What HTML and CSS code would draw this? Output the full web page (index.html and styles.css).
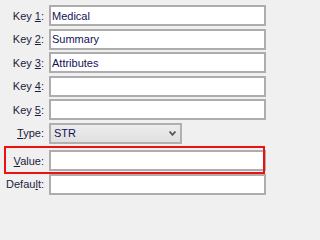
FILE: index.html
```html
<!DOCTYPE html>
<html>
<head>
<meta charset="utf-8">
<link rel="stylesheet" href="styles.css">
</head>
<body>
<div class="form">
  <div class="row"><label class="lbl">Key <u>1</u>:</label><input class="field" type="text" value="Medical"></div>
  <div class="row"><label class="lbl">Key <u>2</u>:</label><input class="field" type="text" value="Summary"></div>
  <div class="row"><label class="lbl">Key <u>3</u>:</label><input class="field" type="text" value="Attributes"></div>
  <div class="row"><label class="lbl">Key <u>4</u>:</label><input class="field" type="text" value=""></div>
  <div class="row"><label class="lbl">Key <u>5</u>:</label><input class="field" type="text" value=""></div>
  <div class="row"><label class="lbl"><u>T</u>ype:</label>
    <div class="combo"><span class="combo-text">STR</span>
      <svg class="chev" width="7" height="5" viewBox="0 0 7 5"><path d="M0.5 0.5 L3.5 3.8 L6.5 0.5" fill="none" stroke="#585858" stroke-width="1.8"/></svg>
    </div>
  </div>
  <div class="row row-value"><label class="lbl"><u>V</u>alue:</label><input class="field" type="text" value=""></div>
  <div class="row"><label class="lbl">Defau<u>l</u>t:</label><input class="field" type="text" value=""></div>
</div>
<div class="highlight"></div>
</body>
</html>
```
FILE: styles.css
```css
html {
  background: #f0f0f0;
}
body {
  margin: 0;
  padding: 0;
  background: #f0f0f0;
  font-family: "Liberation Sans", Arial, sans-serif;
  font-size: 11px;
}
.form {
  width: 266px;
  padding-top: 5px;
  display: flex;
  flex-direction: column;
  gap: 2.5px;
}
.row {
  display: grid;
  grid-template-columns: 44px 1fr;
  column-gap: 5px;
  height: 21px;
  align-items: center;
}
.row-value {
  margin-top: 4px;
}
.lbl {
  text-align: right;
  color: #1c1c3a;
  white-space: nowrap;
}
.field {
  box-sizing: border-box;
  height: 21px;
  width: 217px;
  margin: 0;
  border: 2px solid #adadad;
  background: #fff;
  padding: 0 1px;
  font-family: "Liberation Sans", Arial, sans-serif;
  font-size: 11px;
  color: #12125a;
  outline: none;
}
.combo {
  box-sizing: border-box;
  width: 133px;
  height: 21px;
  border: 2px solid #b0b0b0;
  background: linear-gradient(#ececec, #e0e0e0);
  display: flex;
  align-items: center;
  justify-content: space-between;
  padding: 0 4px 0 3px;
  color: #12125a;
}
.chev {
  display: block;
}
.highlight {
  position: absolute;
  left: 4px;
  top: 146px;
  width: 261px;
  height: 28px;
  box-sizing: border-box;
  border: 2px solid #ee1111;
  pointer-events: none;
}
```
